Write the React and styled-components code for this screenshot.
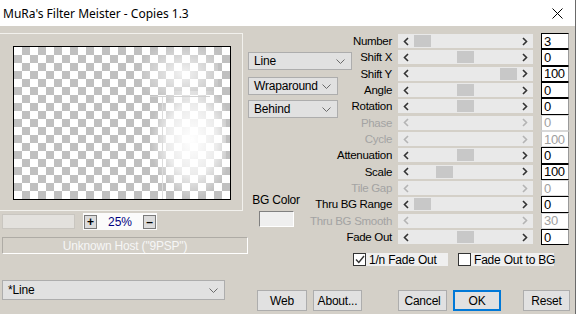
import React from "react";
import styled, { createGlobalStyle } from "styled-components";

const GlobalStyle = createGlobalStyle`
  html, body { margin: 0; padding: 0; }
  body { background: #d4d0c8; font-family: "Liberation Sans", Arial, sans-serif; }
  * { box-sizing: border-box; }
`;

const Window = styled.div`
  width: 576px;
  height: 314px;
  background: #d4d0c8;
  display: flex;
  flex-direction: column;
  overflow: hidden;
  border-right: 1px solid #6a6a6a;
  font-size: 11px;
  color: #000;
`;

const TitleBar = styled.div`
  height: 26px;
  flex: none;
  background: #fff;
  display: flex;
  align-items: center;
  justify-content: space-between;
  padding: 0 12px 0 3px;
  font: 12px "Noto Sans", "Open Sans", sans-serif;
  color: #000;
`;

const Body = styled.div`
  flex: 1;
  display: grid;
  grid-template-columns: 248px 1fr;
`;

const LeftColumn = styled.div`
  display: flex;
  flex-direction: column;
`;

const PreviewFrame = styled.div`
  margin-top: 7px;
  width: 243px;
  height: 178px;
  border: 1px solid #f2f1ed;
  border-left: none;
`;

const Canvas = styled.div`
  margin: 12px 0 0 13px;
  width: 218px;
  height: 154px;
  border: 1px solid #000;
  background: #fff;
  svg { display: block; }
`;

const ZoomRow = styled.div`
  margin-top: 2px;
  height: 17px;
  display: flex;
  align-items: center;
`;

const GrayBox = styled.div`
  margin-left: 2px;
  width: 73px;
  height: 15px;
  background: #e3e1dd;
  border: 1px solid #c9c6c0;
`;

const ZoomControl = styled.div`
  margin-left: 8px;
  width: 74px;
  height: 17px;
  background: #fbfbfb;
  display: flex;
  align-items: center;
  justify-content: space-between;
  padding: 0 1px;
  color: #000080;
  font-size: 12px;
`;

const TinyButton = styled.div`
  width: 13px;
  height: 14px;
  background: #dcdcdc;
  border: 1px solid #7a7a7a;
  display: flex;
  align-items: center;
  justify-content: center;
  color: #000;
  font-weight: bold;
  font-size: 12px;
  line-height: 1;
`;

const Status = styled.div`
  margin: 7px 0 0 2px;
  width: 246px;
  height: 17px;
  border: 1px solid #fff;
  border-top-color: #aeaba5;
  border-left-color: #aeaba5;
  display: flex;
  align-items: center;
  justify-content: center;
  color: #f6f6f6;
  font-size: 12px;
  letter-spacing: -0.2px;
`;

const Select = styled.div`
  width: ${(p) => p.$width}px;
  height: ${(p) => p.$height || 19}px;
  margin-top: ${(p) => p.$mt || 0}px;
  margin-left: ${(p) => p.$ml || 0}px;
  background: #e1e1e1;
  border: 1px solid #adadad;
  display: flex;
  align-items: center;
  justify-content: space-between;
  padding: 0 6px 0 5px;
  font-size: 12px;
  letter-spacing: -0.2px;
  white-space: nowrap;
  position: relative;
  z-index: 1;
`;

const RightArea = styled.div`
  display: flex;
  flex-direction: column;
`;

const ParamGrid = styled.div`
  display: grid;
  grid-template-columns: 92px 52px 149px 28px;
  grid-template-rows: repeat(13, 16.33px);
  padding-top: 7px;
`;

const MiddleColumn = styled.div`
  grid-column: 1;
  grid-row: 1 / span 13;
  display: flex;
  flex-direction: column;
`;

const BGBlock = styled.div`
  margin: 76px 0 0 7px;
  width: 42px;
  display: flex;
  flex-direction: column;
  align-items: center;
  font-size: 12px;
  letter-spacing: -0.2px;
  line-height: 12px;
  white-space: nowrap;
`;

const Swatch = styled.div`
  margin-top: 5px;
  width: 35px;
  height: 16px;
  background: #efefef;
  border: 1px solid #fff;
  border-top-color: #808080;
  border-left-color: #808080;
`;

const Label = styled.div`
  grid-column: 2;
  display: flex;
  justify-content: flex-end;
  align-items: center;
  white-space: nowrap;
  font-size: 11.5px;
  letter-spacing: -0.3px;
  color: ${(p) => (p.$disabled ? "#a3a3a3" : "#000")};
`;

const Track = styled.div`
  grid-column: 3;
  align-self: center;
  margin-left: 6px;
  width: 135px;
  height: 14px;
  background: #e9e9e9;
  display: flex;
  align-items: center;
`;

const Arrow = styled.div`
  width: 16px;
  height: 14px;
  flex: none;
  display: flex;
  align-items: center;
  justify-content: center;
  svg { display: block; }
`;

const Channel = styled.div`
  flex: 1;
  height: 12px;
  display: flex;
`;

const Thumb = styled.div`
  margin-left: ${(p) => p.$offset}px;
  width: 17px;
  height: 12px;
  background: #c8c8c8;
`;

const ValueBox = styled.div`
  grid-column: 4;
  background: #fff;
  border: 1px solid #000;
  border-right-color: #9a9a9a;
  border-bottom-color: ${(p) => (p.$disabled ? "#d8d8d8" : "#000")};
  border-top-color: ${(p) => (p.$disabled ? "#d8d8d8" : "#000")};
  border-left-color: ${(p) => (p.$disabled ? "#c4c4c4" : "#000")};
  display: flex;
  align-items: center;
  padding-left: 2px;
  font-size: 13px;
  letter-spacing: -0.3px;
  line-height: 1;
  color: ${(p) => (p.$disabled ? "#a0a0a0" : "#000")};
`;

const CheckRow = styled.div`
  margin: 8px 0 0 105px;
  height: 13px;
  display: flex;
  gap: 10px;
`;

const CheckItem = styled.div`
  display: flex;
  align-items: center;
  height: 13px;
`;

const Box = styled.div`
  width: 13px;
  height: 13px;
  background: #fff;
  border: 1px solid #333;
  display: flex;
  align-items: center;
  justify-content: center;
  svg { display: block; }
`;

const CheckText = styled.div`
  width: ${(p) => p.$width}px;
  height: 13px;
  background: #efefef;
  display: flex;
  align-items: center;
  padding-left: 3px;
  font-size: 12px;
  letter-spacing: -0.2px;
  white-space: nowrap;
`;

const ButtonRow = styled.div`
  margin-top: 24px;
  height: 21px;
  display: flex;
`;

const Button = styled.div`
  margin-left: ${(p) => p.$ml}px;
  width: ${(p) => p.$width}px;
  height: 21px;
  background: #e1e1e1;
  border: ${(p) => (p.$default ? "2px solid #0078d7" : "1px solid #adadad")};
  display: flex;
  align-items: center;
  justify-content: center;
  font-size: 12px;
  letter-spacing: -0.2px;
`;

const Chevron = () => (
  <svg width="9" height="5" viewBox="0 0 9 5">
    <polyline points="0.5,0.5 4.5,4.5 8.5,0.5" fill="none" stroke="#6a6a6a" strokeWidth="1" />
  </svg>
);

const ArrowIcon = ({ dir, disabled }) => (
  <svg width="6" height="9" viewBox="0 0 6 9">
    <polyline
      points={dir === "left" ? "5,1 1.5,4.5 5,8" : "1,1 4.5,4.5 1,8"}
      fill="none"
      stroke={disabled ? "#b4b4b4" : "#333"}
      strokeWidth="1.6"
    />
  </svg>
);

const params = [
  { label: "Number", value: "3", pos: 0 },
  { label: "Shift X", value: "0", pos: 0.5 },
  { label: "Shift Y", value: "100", pos: 1 },
  { label: "Angle", value: "0", pos: 0.5 },
  { label: "Rotation", value: "0", pos: 0.5 },
  { label: "Phase", value: "0", disabled: true },
  { label: "Cycle", value: "100", disabled: true },
  { label: "Attenuation", value: "0", pos: 0.5 },
  { label: "Scale", value: "100", pos: 0.26 },
  { label: "Tile Gap", value: "0", disabled: true },
  { label: "Thru BG Range", value: "0", pos: 0 },
  { label: "Thru BG Smooth", value: "30", disabled: true },
  { label: "Fade Out", value: "0", pos: 0.5 },
];

function Preview() {
  return (
    <svg width="216" height="152" viewBox="0 0 216 152">
      <defs>
        <pattern id="checker" width="16" height="16" patternUnits="userSpaceOnUse">
          <rect width="16" height="16" fill="#fff" />
          <rect x="8" y="0" width="8" height="8" fill="#c0c0c0" />
          <rect x="0" y="8" width="8" height="8" fill="#c0c0c0" />
        </pattern>
        <radialGradient id="glowTop" cx="0.55" cy="0.5" r="0.6">
          <stop offset="0" stopColor="#fff" stopOpacity="0.8" />
          <stop offset="1" stopColor="#fff" stopOpacity="0" />
        </radialGradient>
        <radialGradient id="glowLow" cx="0.55" cy="0.45" r="0.55">
          <stop offset="0" stopColor="#fff" stopOpacity="1" />
          <stop offset="0.6" stopColor="#fff" stopOpacity="0.7" />
          <stop offset="1" stopColor="#fff" stopOpacity="0" />
        </radialGradient>
      </defs>
      <rect width="216" height="152" fill="url(#checker)" />
      <rect x="126" y="0" width="78" height="52" fill="url(#glowTop)" />
      <rect x="136" y="44" width="76" height="108" fill="url(#glowLow)" />
      <line x1="136" y1="49.5" x2="196" y2="49.5" stroke="#d2d2d2" strokeWidth="1" />
      <line x1="148.5" y1="50" x2="148.5" y2="152" stroke="#dcdcdc" strokeWidth="1" />
    </svg>
  );
}

export default function App() {
  return (
    <>
      <GlobalStyle />
      <Window>
        <TitleBar>
          <span>MuRa's Filter Meister - Copies 1.3</span>
          <svg width="11" height="11" viewBox="0 0 11 11">
            <line x1="0.5" y1="0.5" x2="10.5" y2="10.5" stroke="#000" strokeWidth="1" />
            <line x1="10.5" y1="0.5" x2="0.5" y2="10.5" stroke="#000" strokeWidth="1" />
          </svg>
        </TitleBar>
        <Body>
          <LeftColumn>
            <PreviewFrame>
              <Canvas>
                <Preview />
              </Canvas>
            </PreviewFrame>
            <ZoomRow>
              <GrayBox />
              <ZoomControl>
                <TinyButton>+</TinyButton>
                <span>25%</span>
                <TinyButton>–</TinyButton>
              </ZoomControl>
            </ZoomRow>
            <Status>Unknown Host ("9PSP")</Status>
            <Select $width={223} $height={20} $mt={26} $ml={2}>
              <span>*Line</span>
              <Chevron />
            </Select>
          </LeftColumn>
          <RightArea>
            <ParamGrid>
              <MiddleColumn>
                <Select $width={104} $height={18} $mt={19}>
                  <span>Line</span>
                  <Chevron />
                </Select>
                <Select $width={90} $height={18} $mt={7}>
                  <span>Wraparound</span>
                  <Chevron />
                </Select>
                <Select $width={90} $height={18} $mt={5}>
                  <span>Behind</span>
                  <Chevron />
                </Select>
                <BGBlock>
                  <span>BG Color</span>
                  <Swatch />
                </BGBlock>
              </MiddleColumn>
              {params.map((p, i) => (
                <React.Fragment key={p.label}>
                  <Label $disabled={p.disabled} style={{ gridRow: i + 1 }}>
                    {p.label}
                  </Label>
                  <Track style={{ gridRow: i + 1 }}>
                    <Arrow>
                      <ArrowIcon dir="left" disabled={p.disabled} />
                    </Arrow>
                    <Channel>
                      {!p.disabled && <Thumb $offset={Math.round(p.pos * 86)} />}
                    </Channel>
                    <Arrow>
                      <ArrowIcon dir="right" disabled={p.disabled} />
                    </Arrow>
                  </Track>
                  <ValueBox $disabled={p.disabled} style={{ gridRow: i + 1 }}>
                    {p.value}
                  </ValueBox>
                </React.Fragment>
              ))}
            </ParamGrid>
            <CheckRow>
              <CheckItem>
                <Box>
                  <svg width="10" height="9" viewBox="0 0 10 9">
                    <polyline points="1,4.5 3.8,7.5 9,1" fill="none" stroke="#333" strokeWidth="1.4" />
                  </svg>
                </Box>
                <CheckText $width={82}>1/n Fade Out</CheckText>
              </CheckItem>
              <CheckItem>
                <Box />
                <CheckText $width={83}>Fade Out to BG</CheckText>
              </CheckItem>
            </CheckRow>
            <ButtonRow>
              <Button $ml={9} $width={50}>Web</Button>
              <Button $ml={6} $width={49}>About...</Button>
              <Button $ml={36} $width={49}>Cancel</Button>
              <Button $ml={6} $width={48} $default>OK</Button>
              <Button $ml={22} $width={47}>Reset</Button>
            </ButtonRow>
          </RightArea>
        </Body>
      </Window>
    </>
  );
}
